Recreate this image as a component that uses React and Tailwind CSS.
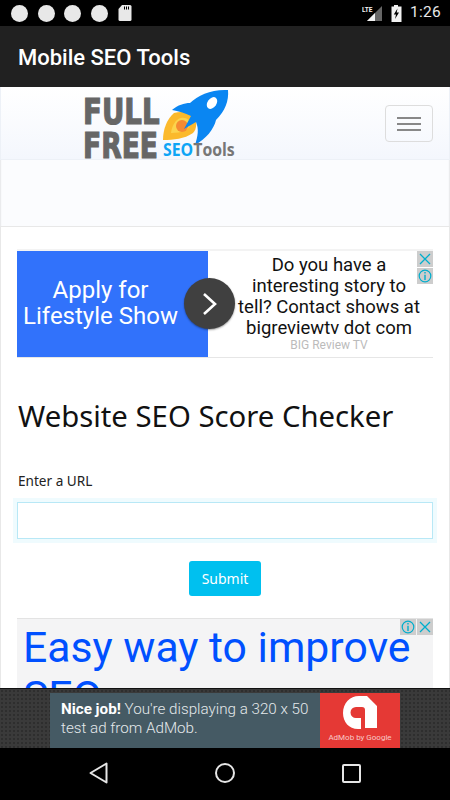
const Roboto = { fontFamily: "Roboto, sans-serif" };

function StatusBar() {
  return (
    <div className="h-[26px] bg-black flex items-center pl-[11px] pr-[9px] shrink-0">
      <div className="flex gap-[9.5px]">
        <div className="w-[17px] h-[17px] rounded-full bg-[#e8e8e8]" />
        <div className="w-[17px] h-[17px] rounded-full bg-[#e8e8e8]" />
        <div className="w-[17px] h-[17px] rounded-full bg-[#e8e8e8]" />
        <div className="w-[17px] h-[17px] rounded-full bg-[#e8e8e8]" />
      </div>
      <svg className="ml-[10px]" width="14" height="16" viewBox="0 0 14 16">
        <path d="M4 0h8a1.500 1.500 0 0 1 1.500 1.500V14.500a1.500 1.500 0 0 1-1.500 1.500H2A1.500 1.500 0 0 1 .5 14.500V4z" fill="#e8e8e8" />
        <path d="M6 1.500h1v3H6zM8 1.500h1v3H8zM10 1.500h1v3h-1z" fill="#000" />
      </svg>
      <div className="ml-auto flex items-center">
        <svg width="22" height="17" viewBox="0 0 22 17">
          <path d="M20 1v15H5z" fill="#666" />
          <path d="M13 8v8H5z" fill="#f2f2f2" />
          <text x="0" y="7" fontSize="6.500" fontWeight="700" fill="#f2f2f2" style={Roboto}>LTE</text>
        </svg>
        <svg className="ml-[7px]" width="11" height="17" viewBox="0 0 11 17">
          <path d="M3 0h4v1.500h3.500V17H.5V1.500H3z" fill="#f2f2f2" />
          <path d="M6.500 3.500 2.800 9.500h2.200L4 14l4-6.500H5.700z" fill="#000" />
        </svg>
        <span className="ml-[8px] text-[15.500px] leading-none text-[#e8e8e8] tracking-[0.3px]" style={Roboto}>1:26</span>
      </div>
    </div>
  );
}

function AppBar() {
  return (
    <div className="h-[61px] bg-[#212121] flex items-center pl-[18px] pt-[2px] shrink-0">
      <span className="text-[22px] font-medium text-white" style={Roboto}>Mobile SEO Tools</span>
    </div>
  );
}

function Logo() {
  return (
    <div className="relative w-[160px] h-[71px]">
      <div
        className="absolute left-[1px] top-[7px] text-[#666] font-bold text-[35px] leading-[34px] [-webkit-text-stroke:1.2px_#666]"
        style={{ fontFamily: "'DejaVu Sans', sans-serif" }}
      >
        <div className="scale-x-[0.79] origin-left">FULL</div>
        <div className="scale-x-[0.76] origin-left">FREE</div>
      </div>
      <svg className="absolute left-[78px] top-[-1px]" width="72" height="64" viewBox="0 0 72 64">
        <path d="M3 53C3 42 7 32 14 26C20 24 28 25 32 27C38 33 37 42 33 46C24 52 14 53 3 53z" fill="#fbb92c" />
        <path d="M11 46C12 38 16 32 21 31C26 30 31 33 30 38C29 43 22 46 11 46z" fill="#fcd34d" />
        <circle cx="22" cy="39" r="6" fill="#f58a33" />
        <path d="M12 23C18 18 24 16 30 16C38 8 52 2 68 3C69 14 65 24 56 33C54 42 46 52 35 58C38 49 39 42 36 35L24 42L31 29C25 26 18 24 12 23z" fill="#0a86f2" />
        <ellipse cx="52" cy="16" rx="4.500" ry="6.500" transform="rotate(35 52 16)" fill="#fff" />
      </svg>
      <div
        className="absolute left-[81px] top-[51px] text-[18px] leading-[20px] font-bold scale-x-[0.88] origin-left whitespace-nowrap"
        style={{ fontFamily: "'Open Sans', sans-serif" }}
      >
        <span className="text-[#0ea5f5]">SEO</span>
        <span className="text-[#777]">Tools</span>
      </div>
    </div>
  );
}

function NavBar() {
  return (
    <div className="h-[73px] border-x border-b border-[#edf1f7] bg-gradient-to-b from-white to-[#f4f7fd] relative flex items-start overflow-hidden shrink-0">
      <div className="ml-[81px] mt-[1px]">
        <Logo />
      </div>
      <button className="absolute right-[16px] top-[18px] w-[48px] h-[37px] border border-[#ddd] rounded-[4px] flex flex-col items-center justify-center gap-[4px]">
        <span className="w-[24px] h-[2px] bg-[#888]" />
        <span className="w-[24px] h-[2px] bg-[#888]" />
        <span className="w-[24px] h-[2px] bg-[#888]" />
      </button>
    </div>
  );
}

function AdChoices({ flip }) {
  const close = (
    <div className="w-[16px] h-[16px] bg-[#cdcdcd] flex items-center justify-center">
      <svg width="12" height="12" viewBox="0 0 12 12">
        <path d="M1 1l10 10M11 1 1 11" stroke="#00aecd" strokeWidth="1.300" fill="none" />
      </svg>
    </div>
  );
  const info = (
    <div className="w-[16px] h-[16px] bg-[#cdcdcd] flex items-center justify-center">
      <svg width="14" height="14" viewBox="0 0 14 14">
        <circle cx="7" cy="7" r="5.800" stroke="#00aecd" strokeWidth="1.200" fill="none" />
        <path d="M6.300 3h1.400v1.500H6.300zM6.300 5.700h1.400V11H6.300z" fill="#00aecd" />
      </svg>
    </div>
  );
  return flip ? (
    <div className="absolute right-0 top-0 flex gap-[1px]">{info}{close}</div>
  ) : (
    <div className="absolute right-0 top-0 flex flex-col gap-[1px]">{close}{info}</div>
  );
}

function TopAd() {
  return (
    <div className="relative h-[109px] flex border-b border-[#e6e6e6] border-t-2 border-t-[#f3f3f3]" style={Roboto}>
      <div className="w-[191px] bg-[#3172fb] text-white text-[24px] leading-[26px] flex items-center justify-center text-center pr-[24px] pb-[2px]">
        <div className="whitespace-nowrap">Apply for<br />Lifestyle Show</div>
      </div>
      <div className="flex-1 bg-white flex flex-col items-center pl-[17px] pt-[4px]">
        <div className="text-[18.500px] leading-[21px] text-[#111] text-center whitespace-nowrap">
          Do you have a<br />interesting story to<br />tell? Contact shows at<br />bigreviewtv dot com
        </div>
        <div className="text-[12px] leading-[16px] text-[#bbb] mt-[-2px]">BIG Review TV</div>
      </div>
      <div className="absolute left-[167px] top-[27px] w-[51px] h-[51px] rounded-full bg-[#404040] shadow-[0_1px_2px_rgba(0,0,0,0.4)] flex items-center justify-center">
        <svg width="18" height="26" viewBox="0 0 18 26">
          <path d="M3 3l11 10L3 23" stroke="#fff" strokeWidth="2.600" fill="none" />
        </svg>
      </div>
      <AdChoices />
    </div>
  );
}

function Card() {
  return (
    <div className="flex-1 min-h-0 bg-white border-x border-t border-[#e8e8e8] px-[16px] pt-[22px] overflow-hidden">
      <TopAd />
      <h1 className="mt-[38px] ml-[1px] text-[29.300px] leading-[41px] text-[#111]" style={{ fontFamily: "'Noto Sans', sans-serif" }}>
        Website SEO Score Checker
      </h1>
      <label className="block mt-[34px] ml-[1px] text-[13.600px] leading-[20px] text-[#222]" style={{ fontFamily: "'Noto Sans', sans-serif" }}>
        Enter a URL
      </label>
      <input className="block mt-[11px] w-full h-[37px] bg-white border border-[#b8e8f6] shadow-[0_0_0_4px_#effbfe] outline-none" />
      <div className="flex justify-center mt-[22px]">
        <button className="w-[72px] h-[35px] bg-[#00c0ef] rounded-[3px] text-white text-[14px]" style={{ fontFamily: "'Noto Sans', sans-serif" }}>
          Submit
        </button>
      </div>
      <div className="relative mt-[22px] h-[100px] bg-[#f4f4f5] border-t border-[#e3e3e3] pl-[6px] pt-[4px]" style={Roboto}>
        <div className="text-[42.700px] leading-[49px] text-[#0050ff]">Easy way to improve SEO</div>
        <AdChoices flip />
      </div>
    </div>
  );
}

function BottomAd() {
  return (
    <div className="h-[60px] border-t border-[#111] bg-[#3a3a3a] bg-[radial-gradient(#2e2e2e_1px,transparent_1px)] bg-[length:4px_4px] flex justify-center items-start pt-[4px] shrink-0" style={Roboto}>
      <div className="w-[350px] h-[55px] bg-[#455a64] flex">
        <div className="flex-1 pl-[11px] pt-[7px] text-[15.200px] leading-[19px] font-light text-[#e4e9eb] whitespace-nowrap">
          <b className="text-white font-bold">Nice job!</b> You're displaying a 320 x 50<br />test ad from AdMob.
        </div>
        <div className="w-[80px] bg-[#e53935] flex flex-col items-center pt-[3px]">
          <svg width="34" height="34" viewBox="0 0 34 34">
            <path d="M16 0h8l10 10v22H22V14a3 3 0 0 0-3-3h-6a5 5 0 0 0 0 11h5v11h-3C6 33 0 26 0 17 0 7 7 0 16 0z" fill="#fff" />
          </svg>
          <span className="text-[8px] leading-[12px] mt-[2px] text-[#f8c9c7] whitespace-nowrap">AdMob by Google</span>
        </div>
      </div>
    </div>
  );
}

function NavKeys() {
  return (
    <div className="h-[52px] bg-black flex items-center justify-center shrink-0 pb-[2px]">
      <div className="w-[272px] flex items-center justify-between">
        <svg width="19" height="22" viewBox="0 0 19 22">
          <path d="M17.500 1.500v19L1.500 11z" stroke="#e6e6e6" strokeWidth="2" strokeLinejoin="round" fill="none" />
        </svg>
        <svg width="20" height="20" viewBox="0 0 20 20">
          <circle cx="10" cy="10" r="9" stroke="#e6e6e6" strokeWidth="2" fill="none" />
        </svg>
        <svg width="19" height="19" viewBox="0 0 19 19">
          <rect x="1" y="1" width="17" height="17" rx="1" stroke="#e6e6e6" strokeWidth="2" fill="none" />
        </svg>
      </div>
    </div>
  );
}

export default function App() {
  return (
    <div className="w-[450px] h-[800px] flex flex-col overflow-hidden bg-white">
      <StatusBar />
      <AppBar />
      <div className="flex-1 min-h-0 flex flex-col bg-[#fbfcfe] shadow-[inset_0_2px_2px_rgba(0,0,0,0.25)]">
        <NavBar />
        <div className="h-[66px] shrink-0" />
        <Card />
      </div>
      <BottomAd />
      <NavKeys />
    </div>
  );
}
